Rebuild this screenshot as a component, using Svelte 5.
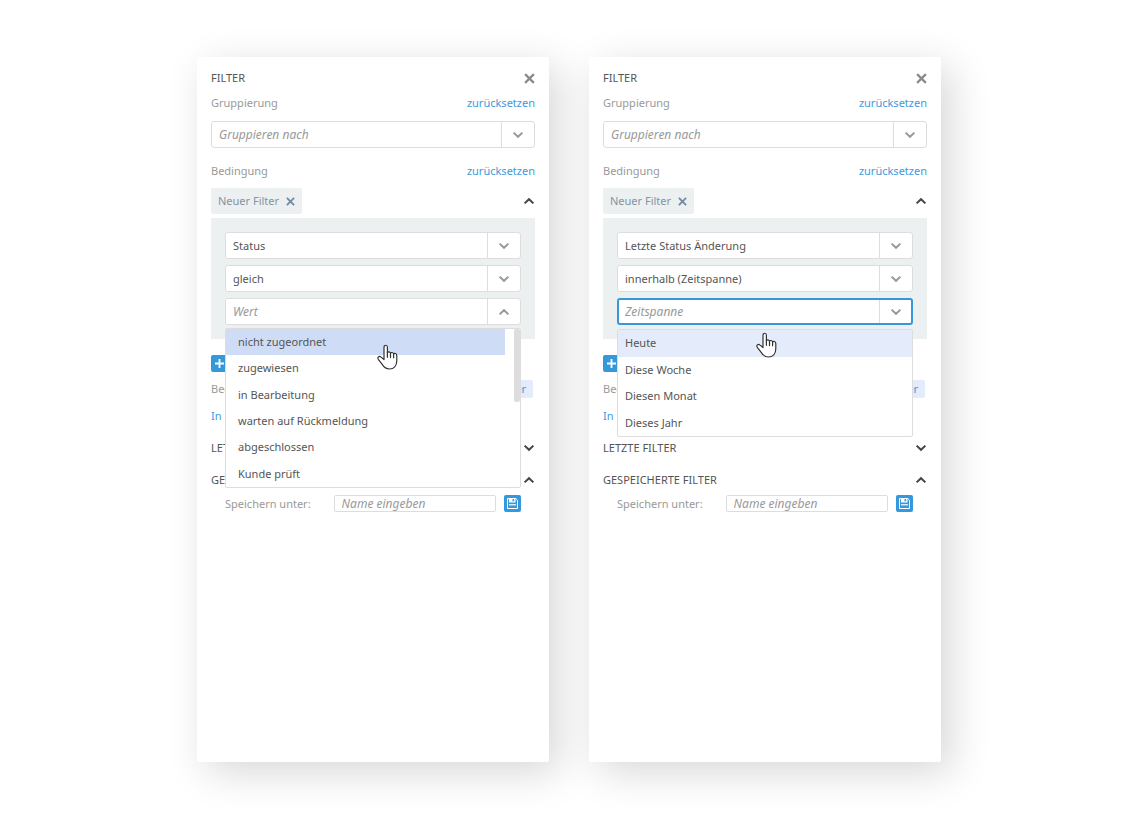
<script lang="ts">
  type Panel = {
    id: string;
    field: string;
    operator: string;
    placeholder: string;
    open: boolean;
    focused: boolean;
    scrollable: boolean;
    active: number;
    options: string[];
  };

  let panels: Panel[] = $state([
    {
      id: "status",
      field: "Status",
      operator: "gleich",
      placeholder: "Wert",
      open: true,
      focused: false,
      scrollable: true,
      active: 0,
      options: [
        "nicht zugeordnet",
        "zugewiesen",
        "in Bearbeitung",
        "warten auf Rückmeldung",
        "abgeschlossen",
        "Kunde prüft",
      ],
    },
    {
      id: "zeitspanne",
      field: "Letzte Status Änderung",
      operator: "innerhalb (Zeitspanne)",
      placeholder: "Zeitspanne",
      open: true,
      focused: true,
      scrollable: false,
      active: 0,
      options: ["Heute", "Diese Woche", "Diesen Monat", "Dieses Jahr"],
    },
  ]);
</script>

{#snippet chevron(up: boolean)}
  <svg class="chevron" viewBox="0 0 12 8" aria-hidden="true">
    <path d={up ? "M1.6 6.4 6 2.2l4.4 4.2" : "M1.6 1.6 6 5.8l4.4-4.2"} />
  </svg>
{/snippet}

{#snippet cross()}
  <svg class="cross" viewBox="0 0 10 10" aria-hidden="true">
    <path d="M1 1l8 8M9 1 1 9" />
  </svg>
{/snippet}

{#snippet dropdown(label: string, value: string, empty: boolean)}
  <div class="field">
    <select class:empty aria-label={label}>
      <option>{value}</option>
    </select>
    <span class="arrow">{@render chevron(false)}</span>
  </div>
{/snippet}

<main>
  {#each panels as panel (panel.id)}
    <section class="panel">
      <header class="row">
        <h2>FILTER</h2>
        <button class="icon close" aria-label="Schließen">{@render cross()}</button>
      </header>

      <div class="row group">
        <span class="label">Gruppierung</span>
        <a href="#gruppierung">zurücksetzen</a>
      </div>
      {@render dropdown("Gruppierung", "Gruppieren nach", true)}

      <div class="row condition">
        <span class="label">Bedingung</span>
        <a href="#bedingung">zurücksetzen</a>
      </div>
      <div class="row tabs">
        <span class="chip">
          Neuer Filter
          <button class="icon" aria-label="Filter entfernen">{@render cross()}</button>
        </span>
        <button class="icon" aria-label="Filter einklappen">{@render chevron(true)}</button>
      </div>

      <div class="box">
        {@render dropdown("Feld", panel.field, false)}
        {@render dropdown("Operator", panel.operator, false)}
        <div class="combo">
          <div class="field" class:focused={panel.focused}>
            <input
              type="text"
              role="combobox"
              aria-label={panel.placeholder}
              aria-expanded={panel.open}
              aria-controls="list-{panel.id}"
              placeholder={panel.placeholder}
            />
            <button
              class="arrow"
              aria-label="Liste öffnen"
              onclick={() => (panel.open = !panel.open)}
            >
              {@render chevron(!panel.focused)}
            </button>
          </div>

          {#if panel.open}
            <div class="menu" class:scrollable={panel.scrollable}>
              <ul role="listbox" id="list-{panel.id}" aria-label={panel.placeholder}>
                {#each panel.options as option, i}
                  <li role="option" aria-selected={i === panel.active} class:active={i === panel.active}>
                    {option}
                  </li>
                {/each}
              </ul>
              {#if panel.scrollable}
                <span class="thumb"></span>
              {/if}
              <svg class="pointer" viewBox="0 0 22 26" aria-hidden="true">
                <path
                  d="M7 15.5V3.2C7 .6 10.4.6 10.4 3.2v5.6c.3-1.5 3-1.3 3.1.5.5-1.3 2.9-1 3.1.7.7-1.1 3.2-.7 3.2 1.4v5.1c0 5.1-2.7 8.5-7.3 8.5-3.7 0-5.5-1.7-7.3-4.6L1.3 15.3c-1.3-2.1 1.2-3.7 2.8-2.2z"
                />
                <path d="M10.4 8.5v4.8M13.5 9.3v4.3M16.6 10v3.8" />
              </svg>
            </div>
          {/if}
        </div>
      </div>

      <button class="square add" aria-label="Filter hinzufügen">
        <svg viewBox="0 0 17 17" aria-hidden="true">
          <path d="M8.5 4v9M4 8.5h9" stroke="#fff" stroke-width="1.8" />
        </svg>
      </button>
      <div class="row link-mode">
        <span class="label">Bedingungen verknüpfen</span>
        <button class="mode">oder</button>
      </div>
      <div class="row section">
        <a href="#ergebnis">In den Ergebnissen suchen</a>
      </div>

      <div class="row section">
        <h2>LETZTE FILTER</h2>
        <button class="icon" aria-label="Letzte Filter ausklappen">{@render chevron(false)}</button>
      </div>
      <div class="row">
        <h2>GESPEICHERTE FILTER</h2>
        <button class="icon" aria-label="Gespeicherte Filter einklappen">{@render chevron(true)}</button>
      </div>
      <form class="save" onsubmit={(e) => e.preventDefault()}>
        <label for="name-{panel.id}">Speichern unter:</label>
        <input id="name-{panel.id}" type="text" placeholder="Name eingeben" />
        <button class="square" aria-label="Speichern">
          <svg viewBox="0 0 17 17" aria-hidden="true">
            <path d="M3.5 3.5h8.3l1.7 1.7v8.3h-10z" fill="none" stroke="#fff" />
            <path d="M5 3.5h6.5v4H5z" fill="#fff" />
            <path d="M8.5 4h1.6v2.3H8.5z" fill="#3498db" />
            <path d="M5 9.8h7" stroke="#fff" stroke-width="1.2" />
          </svg>
        </button>
      </form>
    </section>
  {/each}
</main>

<style>
  :global(body) {
    margin: 0;
    background: #fff;
  }

  main {
    display: grid;
    grid-template-columns: 1fr 1fr;
    gap: 40px;
    max-width: 744px;
    margin: 0 auto;
    padding: 57px 2px 58px 0;
    color: #555;
    font-family: "Noto Sans", sans-serif;
    font-size: 11px;
    line-height: 20px;
  }

  .panel {
    box-sizing: border-box;
    min-height: calc(100vh - 115px);
    padding: 11px 14px;
    background: #fff;
    border-radius: 2px;
    box-shadow: 10px 10px 40px rgba(0, 0, 0, 0.16);
  }

  h2 {
    margin: 0;
    font-size: 11px;
    font-weight: 400;
  }
  a {
    color: #3d9ade;
    text-decoration: none;
  }
  button {
    padding: 0;
    border: none;
    background: none;
    font: inherit;
    cursor: pointer;
  }
  input,
  select {
    box-sizing: border-box;
    min-width: 0;
    margin: 0;
    border: none;
    outline: none;
    background: #fff;
    color: #555;
    font: inherit;
  }
  input::placeholder {
    color: #999;
    font-size: 12px;
    font-style: italic;
    opacity: 1;
  }

  .row {
    display: flex;
    align-items: center;
    justify-content: space-between;
    height: 20px;
  }
  .group {
    margin: 5px 0 8px;
  }
  .condition {
    margin: 13px 0 7px;
  }
  .tabs {
    height: 26px;
    margin-bottom: 4px;
  }
  .label,
  label {
    color: #999;
  }

  .icon {
    display: flex;
    color: #444;
  }
  .close {
    color: #8a8a8a;
  }
  .chevron {
    width: 12px;
    height: 8px;
    fill: none;
    stroke: currentColor;
    stroke-width: 2;
  }
  .cross {
    width: 11px;
    height: 11px;
    stroke: currentColor;
    stroke-width: 2;
  }

  .chip {
    display: flex;
    align-items: center;
    gap: 7px;
    height: 26px;
    padding: 0 7px;
    border-radius: 2px;
    background: #ecf0f1;
    color: #8593a3;
  }
  .chip .icon {
    color: #7488a0;
  }
  .chip .cross {
    width: 9px;
    height: 9px;
  }

  .field {
    display: flex;
    box-sizing: border-box;
    height: 27px;
    border: 1px solid #ddd;
    border-radius: 3px;
    background: #fff;
  }
  .field select,
  .field input {
    flex: 1;
    padding: 0 7px;
    border-radius: 3px;
    appearance: none;
  }
  .field select.empty {
    color: #999;
    font-size: 12px;
    font-style: italic;
  }
  .arrow {
    box-sizing: border-box;
    display: flex;
    align-items: center;
    justify-content: center;
    width: 33px;
    border-left: 1px solid #ddd;
    color: #999;
  }
  .field.focused {
    border: 2px solid #3498db;
  }
  .focused input {
    padding: 0 6px;
  }
  .focused .arrow {
    width: 32px;
  }

  .box {
    display: grid;
    gap: 6px;
    padding: 14px;
    background: #ecf0f1;
  }
  .combo {
    position: relative;
  }

  .menu {
    position: absolute;
    z-index: 1;
    top: 31px;
    left: 0;
    right: 0;
    border: 1px solid #ddd;
    border-radius: 2px;
    background: #fff;
  }
  .menu ul {
    display: grid;
    grid-auto-rows: 1fr;
    height: 106px;
    margin: 0;
    padding: 0;
    list-style: none;
  }
  .menu li {
    display: flex;
    align-items: center;
    padding: 0 7px;
  }
  .menu li.active {
    background: #e4ebfa;
  }
  .scrollable {
    top: 30px;
  }
  .scrollable ul {
    height: 158px;
    padding-right: 15px;
  }
  .scrollable li {
    padding: 0 12px;
  }
  .scrollable li.active {
    background: #cfdcf5;
  }
  .thumb {
    position: absolute;
    top: 0;
    right: 0;
    width: 6px;
    height: 73px;
    border-radius: 2px;
    background: #ddd;
  }
  .pointer {
    position: absolute;
    top: 2px;
    left: 138px;
    width: 22px;
    height: 26px;
    fill: #fff;
    stroke: #333;
    stroke-width: 1.2;
    stroke-linejoin: round;
    stroke-linecap: round;
  }
  .scrollable .pointer {
    top: 15px;
    left: 151px;
  }

  .square {
    display: block;
    width: 17px;
    height: 17px;
    border-radius: 2px;
    background: #3498db;
  }
  .square svg {
    display: block;
  }
  .add {
    margin-top: 16px;
  }
  .link-mode {
    height: 18px;
    margin: 8px 2px 8px 0;
  }
  .mode {
    height: 18px;
    padding: 0 7px;
    border-radius: 2px;
    background: #e4ebfa;
    color: #3d9ade;
    line-height: 18px;
  }
  .section {
    margin-bottom: 12px;
  }

  .save {
    display: flex;
    align-items: center;
    height: 17px;
    margin: 5px 14px 0;
  }
  .save input {
    flex: 1;
    height: 17px;
    margin: 0 8px 0 23px;
    padding: 0 7px;
    border: 1px solid #ddd;
    border-radius: 2px;
    line-height: 15px;
  }
</style>
